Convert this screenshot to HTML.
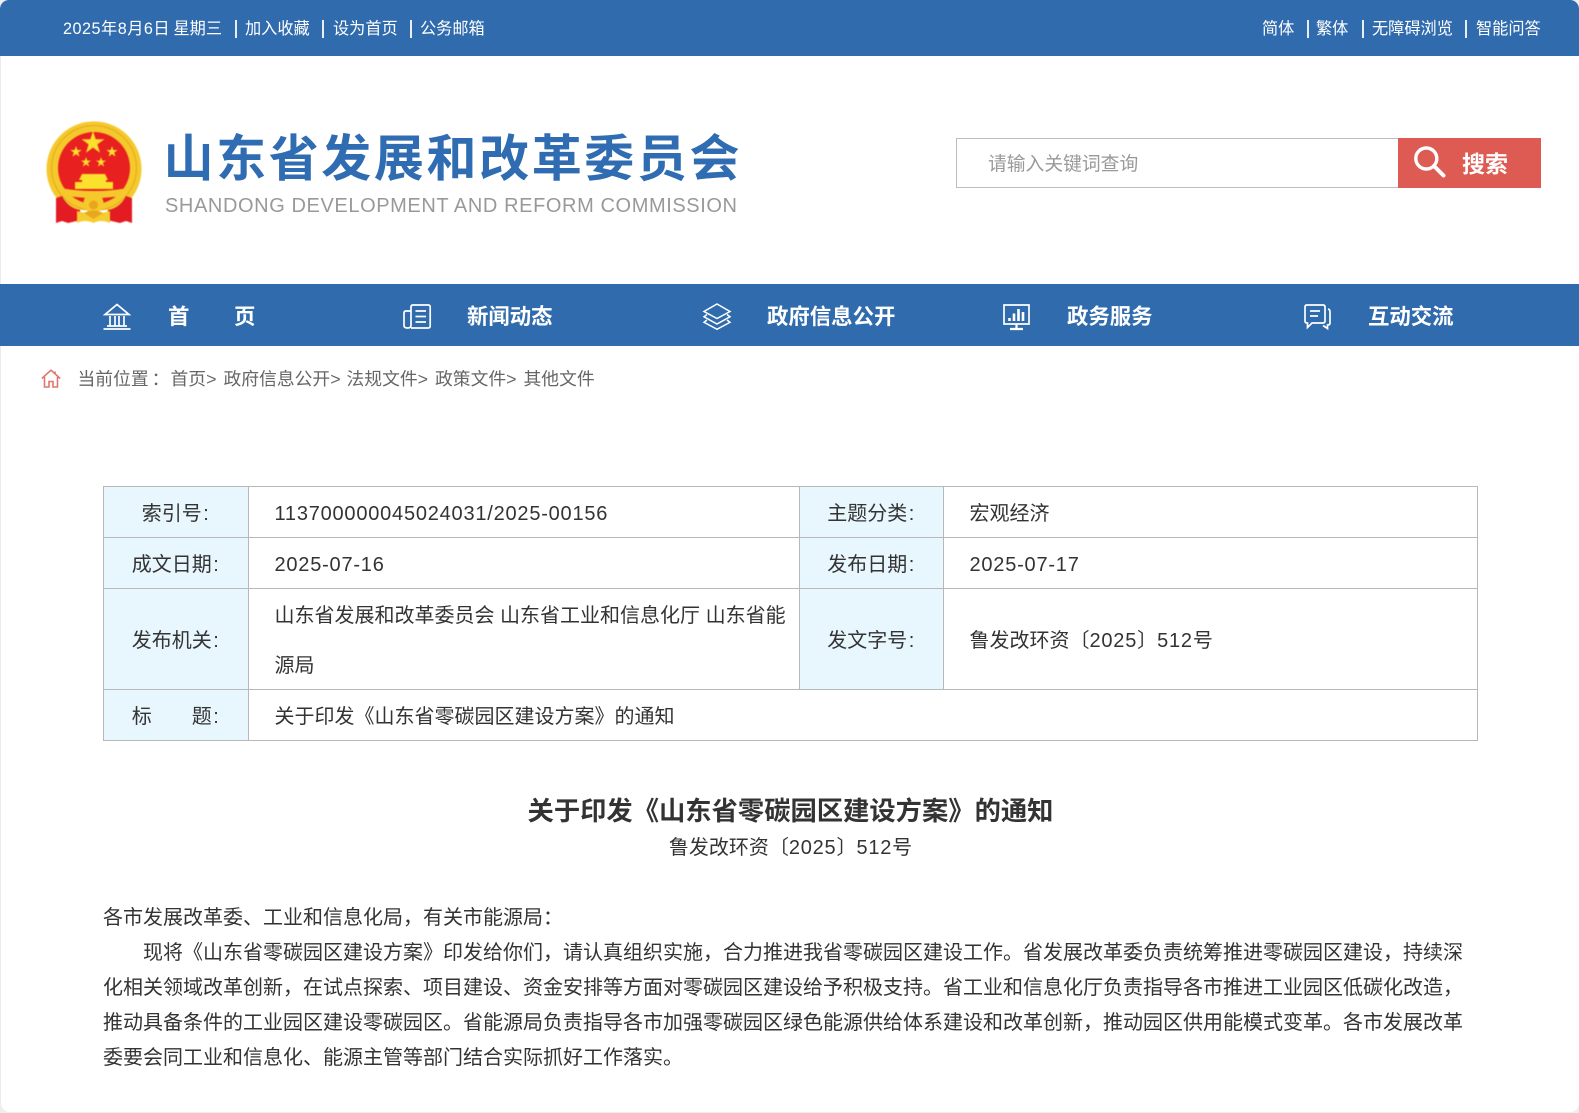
<!DOCTYPE html>
<html lang="zh-CN">
<head>
<meta charset="utf-8">
<title>关于印发《山东省零碳园区建设方案》的通知</title>
<style>
html,body{margin:0;padding:0;width:1579px;height:1113px;overflow:hidden;background:#eee;}
body{font-family:"Liberation Sans","Noto Sans CJK SC",sans-serif;color:#333;}
#page{position:absolute;left:0;top:0;width:1579px;height:1112px;background:#fff;border-radius:9px;overflow:hidden;box-shadow:inset 1px 0 0 #ececec;}
.t{position:absolute;white-space:nowrap;line-height:1;}
.bar{position:absolute;left:0;width:1579px;background:#306bad;}
.top{font-size:16.2px;color:#fff;top:21px;}
.sep{position:absolute;top:20px;width:2px;height:18px;background:#e8eef6;}
.nav{font-size:21.4px;font-weight:bold;color:#fff;top:307px;}
.crumb{font-size:17.8px;color:#666;top:371px;}
svg{position:absolute;overflow:visible;}
table{position:absolute;left:103px;top:486px;width:1374px;border-collapse:collapse;table-layout:fixed;font-size:20px;color:#333;}
td{border:1px solid #b8b8b8;line-height:50px;padding:0;white-space:nowrap;}
td.l{background:#e8f6fe;text-align:center;}
td.v{padding-left:25.5px;}
td>span{position:relative;top:2px;}
.d{letter-spacing:.78px;}
.c{margin:0 1.5px 0 1.5px;}
</style>
</head>
<body>
<div id="page">
  <div class="bar" style="top:0;height:56px;"></div>
  <span class="t top" style="left:63px;letter-spacing:.5px;">2025年8月6日</span>
  <span class="t top" style="left:173.500px;">星期三</span>
  <i class="sep" style="left:235px;"></i>
  <span class="t top" style="left:245px;">加入收藏</span>
  <i class="sep" style="left:322px;"></i>
  <span class="t top" style="left:333px;">设为首页</span>
  <i class="sep" style="left:410px;"></i>
  <span class="t top" style="left:420px;">公务邮箱</span>
  <span class="t top" style="left:1262px;">简体</span>
  <i class="sep" style="left:1307px;"></i>
  <span class="t top" style="left:1316px;">繁体</span>
  <i class="sep" style="left:1362px;"></i>
  <span class="t top" style="left:1372px;">无障碍浏览</span>
  <i class="sep" style="left:1465px;"></i>
  <span class="t top" style="left:1476px;">智能问答</span>

  <!-- emblem -->
  <svg style="left:46px;top:119.500px;filter:blur(.45px);" width="96" height="104" viewBox="0 0 96 104">
    <path d="M9 76A47.500 47.500 0 1 1 87 76L72 90H24Z" fill="#f5c92c"/>
    <circle cx="48" cy="48" r="42.500" fill="none" stroke="#e2a81e" stroke-width="1"/>
    <circle cx="48" cy="48" r="36" fill="#e8201f"/>
    <g fill="#fbe02c">
      <polygon points="47,11 49.700,19.300 58.400,19.300 51.400,24.400 54,32.700 47,27.600 40,32.700 42.600,24.400 35.600,19.300 44.300,19.300"/>
      <polygon points="30,26 31.300,30 35.700,30 32.200,32.500 33.500,36.600 30,34.100 26.500,36.600 27.800,32.500 24.300,30 28.700,30"/>
      <polygon points="66,26 67.300,30 71.700,30 68.200,32.500 69.500,36.600 66,34.100 62.500,36.600 63.800,32.500 60.300,30 64.700,30"/>
      <polygon points="40,37 41.200,40.600 45,40.600 41.900,42.800 43.100,46.600 40,44.300 36.900,46.600 38.100,42.800 35,40.600 38.800,40.600"/>
      <polygon points="55,37 56.200,40.600 60,40.600 56.900,42.800 58.100,46.600 55,44.300 51.900,46.600 53.100,42.800 50,40.600 53.800,40.600"/>
      <path d="M36 54H59L62 60H60V62H67V69H29V62H36V60H33Z"/>
    </g>
    <path d="M14 68Q48 74 82 68L81 75Q48 81 15 75Z" fill="#f5c92c"/>
    <path d="M16 72Q22 85 37 88V84Q26 82 21 72Z" fill="#f5c92c"/>
    <path d="M80 72Q74 85 58 88V84Q70 82 75 72Z" fill="#f5c92c"/>
    <circle cx="47.500" cy="83" r="10" fill="#f5c92c"/>
    <circle cx="47.500" cy="85" r="4.500" fill="#e9a61c"/>
    <path d="M10 78L16 76Q22 88 34 90L35 100L22 103L16 101L10 103Z" fill="#e21c22"/>
    <path d="M86 78L80 76Q74 88 62 90L61 100L74 103L80 101L86 103Z" fill="#e21c22"/>
    <path d="M31 91Q47 96 64 91V103Q55 99 47.500 103Q39 99 31 103Z" fill="#f6cd30"/>
    <path d="M38 93Q47.500 88 57 93L47.500 99Z" fill="#e8a71e"/>
  </svg>

  <div class="t" style="left:163.500px;top:133px;font-size:50px;font-weight:bold;color:#2f6cb1;letter-spacing:2.600px;filter:blur(.3px);line-height:52px;">山东省发展和改革委员会</div>
  <svg style="left:0;top:0;" width="1" height="1">
    <text x="165" y="212" font-size="20" fill="#999" textLength="572" lengthAdjust="spacing" font-family="Liberation Sans, sans-serif">SHANDONG DEVELOPMENT AND REFORM COMMISSION</text>
  </svg>

  <!-- search -->
  <div style="position:absolute;left:956px;top:138px;width:442px;height:48px;border:1px solid #bdbdbd;border-right:0;box-sizing:content-box;"></div>
  <span class="t" style="left:988px;top:155px;font-size:18.800px;color:#999;">请输入关键词查询</span>
  <div style="position:absolute;left:1398px;top:138px;width:143px;height:50px;background:#dd5b52;"></div>
  <svg style="left:1398px;top:138px;" width="143" height="50" viewBox="0 0 143 50">
    <circle cx="28.300" cy="20.500" r="10.500" fill="none" stroke="#fff" stroke-width="3.400"/>
    <path d="M36 28L45.500 37.500" stroke="#fff" stroke-width="4" stroke-linecap="round"/>
  </svg>
  <span class="t" style="left:1462px;top:153px;font-size:23px;font-weight:bold;color:#fff;">搜索</span>

  <!-- nav -->
  <div class="bar" style="top:284px;height:62px;"></div>
  <svg style="left:103px;top:303px;" width="28" height="27" viewBox="0 0 28 27" fill="none" stroke="#fff" stroke-width="1.700">
    <path d="M2 11.500L14 1.500L26 11.500Z"/>
    <path d="M7 13V22.500M12 13V22.500M16 13V22.500M21 13V22.500M4 23H24"/>
    <path d="M0.500 26H27.500" stroke-width="1.800"/>
  </svg>
  <span class="t nav" style="left:168px;">首</span>
  <span class="t nav" style="left:234px;">页</span>
  <svg style="left:403px;top:304px;" width="28" height="25" viewBox="0 0 28 25" fill="none" stroke="#fff" stroke-width="1.700">
    <path d="M8 24H25Q27.200 24 27.200 22V3Q27.200 1 25 1H10Q8 1 8 3V21.500Q8 24 4.500 24Q1 24 1 21.500V9Q1 7 3 7H8"/>
    <path d="M12.500 7H23M12.500 12.500H23M12.500 18H23"/>
  </svg>
  <span class="t nav" style="left:467px;">新闻动态</span>
  <svg style="left:703px;top:303px;" width="28" height="27" viewBox="0 0 28 27" fill="none" stroke="#fff" stroke-width="1.500">
    <path d="M14 1L27 8.500L14 15.500L1 8.500Z"/>
    <path d="M4 11.500L1 13.800L14 21L27 13.800L24 11.500"/>
    <path d="M4 17L1 19.300L14 26.300L27 19.300L24 17"/>
  </svg>
  <span class="t nav" style="left:767px;">政府信息公开</span>
  <svg style="left:1003px;top:304px;" width="27" height="26" viewBox="0 0 27 26" fill="none" stroke="#fff" stroke-width="1.700">
    <path d="M1 1H26V20H1Z"/>
    <path d="M6.500 17V14M11 17V9.500M15.500 17V5M20 17V8" stroke-width="2.600"/>
    <path d="M13.500 20V24M7 25H20" stroke-width="2.200"/>
  </svg>
  <span class="t nav" style="left:1067px;">政务服务</span>
  <svg style="left:1304px;top:304px;" width="27" height="26" viewBox="0 0 27 26" fill="none" stroke="#fff" stroke-width="1.700">
    <path d="M3 1H19Q21 1 21 3V17Q21 19 19 19H8L3.500 23.500V19H3Q1 19 1 17V3Q1 1 3 1Z"/>
    <path d="M6 7H16M6 12H14"/>
    <path d="M24 5Q26 5.500 26 8V19Q26 21 24 21H23.500V24.500L19 21.500"/>
  </svg>
  <span class="t nav" style="left:1368px;">互动交流</span>

  <!-- breadcrumb -->
  <svg style="left:41px;top:369px;" width="20" height="19" viewBox="0 0 20 19" fill="none" stroke="#e2756e" stroke-width="1.600">
    <path d="M0.800 9.500L10 1.200L19.200 9.500"/>
    <path d="M3.500 8V18H8V12.500H12V18H16.500V8"/>
    <path d="M14 2.500V5"/>
  </svg>
  <span class="t crumb" style="left:77.500px;">当前位置<span style="margin-left:3px;">：</span></span>
  <span class="t crumb" style="left:170.500px;">首页&gt;</span>
  <span class="t crumb" style="left:223.500px;">政府信息公开&gt;</span>
  <span class="t crumb" style="left:346.500px;">法规文件&gt;</span>
  <span class="t crumb" style="left:435px;">政策文件&gt;</span>
  <span class="t crumb" style="left:523.500px;">其他文件</span>

  <!-- info table -->
  <table>
    <colgroup><col style="width:145px"><col style="width:551px"><col style="width:144px"><col style="width:534px"></colgroup>
    <tr><td class="l"><span>索引号<span class="c">:</span></span></td><td class="v"><span class="d">113700000045024031/2025-00156</span></td><td class="l"><span>主题分类<span class="c">:</span></span></td><td class="v"><span>宏观经济</span></td></tr>
    <tr><td class="l"><span>成文日期<span class="c">:</span></span></td><td class="v"><span class="d">2025-07-16</span></td><td class="l"><span>发布日期<span class="c">:</span></span></td><td class="v"><span class="d">2025-07-17</span></td></tr>
    <tr><td class="l"><span>发布机关<span class="c">:</span></span></td><td class="v"><span>山东省发展和改革委员会 山东省工业和信息化厅 山东省能<br>源局</span></td><td class="l"><span>发文字号<span class="c">:</span></span></td><td class="v"><span>鲁发改环资〔<span class="d">2025</span>〕<span class="d">512</span>号</span></td></tr>
    <tr><td class="l"><span>标&emsp;&emsp;题<span class="c">:</span></span></td><td class="v" colspan="3"><span>关于印发《山东省零碳园区建设方案》的通知</span></td></tr>
  </table>

  <div class="t" style="left:0;width:1581px;top:797px;text-align:center;font-size:26.300px;font-weight:bold;color:#333;line-height:28px;">关于印发《山东省零碳园区建设方案》的通知</div>
  <div class="t" style="left:0;width:1581px;top:837px;text-align:center;font-size:20px;color:#333;line-height:22px;">鲁发改环资〔<span class="d">2025</span>〕<span class="d">512</span>号</div>

  <div style="position:absolute;left:103px;top:901px;width:1400px;font-size:20px;line-height:35px;color:#333;white-space:nowrap;">
    各市发展改革委、工业和信息化局，有关市能源局：<br>
    <span style="padding-left:40px;">现将《山东省零碳园区建设方案》印发给你们，请认真组织实施，合力推进我省零碳园区建设工作。省发展改革委负责统筹推进零碳园区建设，持续深</span><br>
    化相关领域改革创新，在试点探索、项目建设、资金安排等方面对零碳园区建设给予积极支持。省工业和信息化厅负责指导各市推进工业园区低碳化改造，<br>
    推动具备条件的工业园区建设零碳园区。省能源局负责指导各市加强零碳园区绿色能源供给体系建设和改革创新，推动园区供用能模式变革。各市发展改革<br>
    委要会同工业和信息化、能源主管等部门结合实际抓好工作落实。
  </div>
</div>
</body>
</html>
